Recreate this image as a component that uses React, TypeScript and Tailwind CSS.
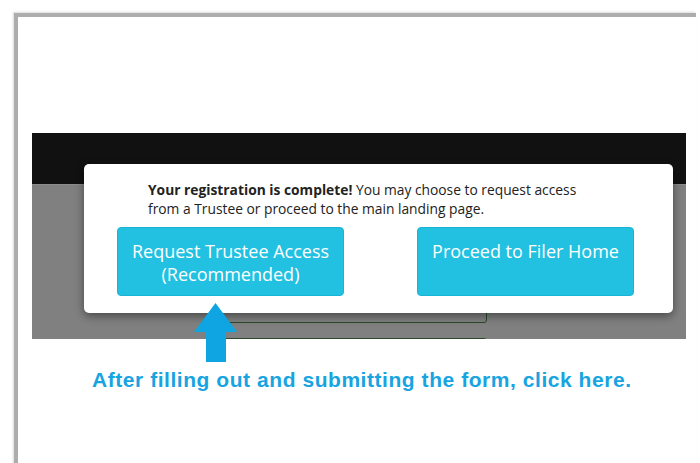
export default function App() {
  return (
    <div className="w-[700px] h-[463px] bg-white overflow-hidden pt-[13px] pl-[14px]">
      <div className="relative w-[682px] h-[460px] border-t-[4px] border-l-[4px] border-[#adadad] shadow-[-1px_-1px_2px_rgba(0,0,0,0.15)] bg-white">
        {/* screenshot of the registration page */}
        <div className="relative ml-[14px] mt-[116px] w-[654px] h-[206px] overflow-hidden bg-[#808080]">
          <div className="h-[51px] bg-[#111111]" />
          <div className="flex flex-col border-t border-[#8c8c8c] pl-[184px]">
            <div className="mt-[86px] w-[271px] h-[52px] border border-[#2a4a2a] rounded-[3px]" />
            <div className="mt-[15px] w-[271px] h-[20px] border border-[#2a4a2a] rounded-[3px]" />
          </div>

          <div
            className="absolute left-[52px] top-[31px] w-[589px] h-[149px] bg-white rounded-[5px] shadow-[0_3px_10px_rgba(0,0,0,0.45)] flex flex-col pt-[16px]"
            style={{ fontFamily: '"Open Sans", sans-serif' }}
          >
            <p className="pl-[64px] text-[13.8px] leading-[19px] text-[#222222]">
              <span className="font-bold">Your registration is complete!</span> You may choose to request access
              <br />
              from a Trustee or proceed to the main landing page.
            </p>
            <div className="flex gap-[73px] pl-[33px] mt-[9px]">
              <button className="w-[227px] h-[69px] flex flex-col items-center pt-[12px] bg-[#22c1e1] border border-[#17b4d6] rounded-[4px] text-white text-[18px] leading-[23px]">
                <span>Request Trustee Access</span>
                <span>(Recommended)</span>
              </button>
              <button className="w-[217px] h-[69px] flex flex-col items-center pt-[12px] bg-[#22c1e1] border border-[#17b4d6] rounded-[4px] text-white text-[18px] leading-[23px]">
                <span>Proceed to Filer Home</span>
              </button>
            </div>
          </div>
        </div>

        <svg className="absolute left-[176px] top-[286px]" width="43" height="59" viewBox="0 0 43 59">
          <path d="M21.5 0 L43 29 L32 29 L32 59 L12 59 L12 29 L0 29 Z" fill="#0ea5e2" />
        </svg>

        <p
          className="mt-[28px] ml-[74px] text-[21px] leading-[25px] font-bold tracking-[0.55px] text-[#17a4e1]"
          style={{ fontFamily: '"Liberation Sans", Arial, sans-serif' }}
        >
          After filling out and submitting the form, click here.
        </p>
      </div>
    </div>
  );
}
